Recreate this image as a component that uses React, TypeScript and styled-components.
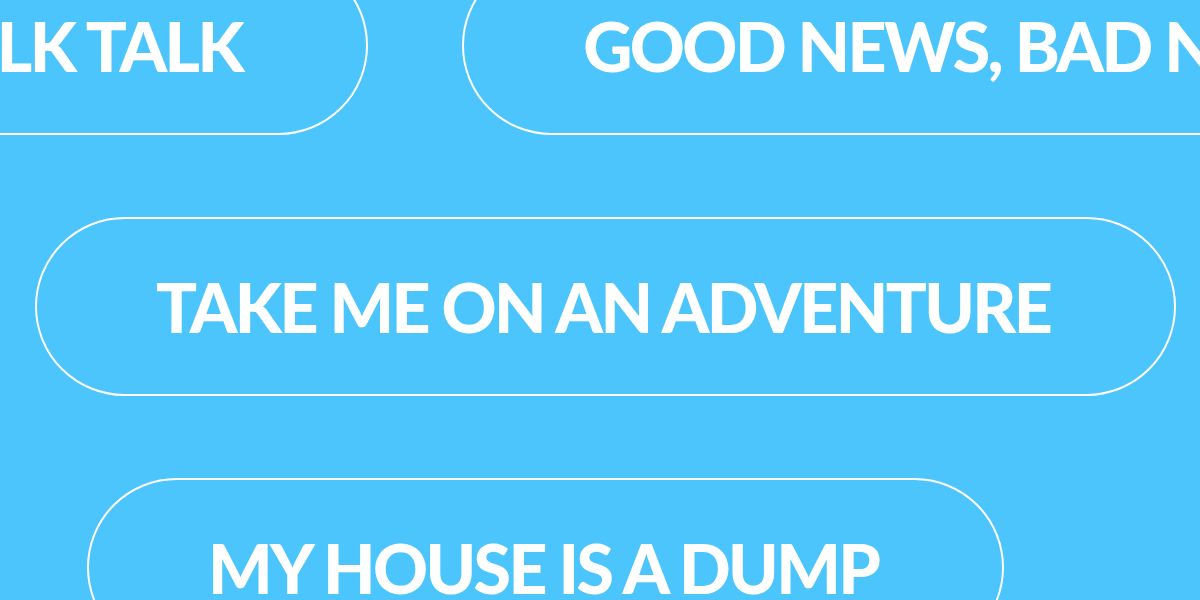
import React from "react";
import styled, { createGlobalStyle } from "styled-components";

const Global = createGlobalStyle`
  html, body { margin: 0; padding: 0; }
  body {
    width: 1200px;
    height: 600px;
    overflow: hidden;
    background: #4bc5fc;
    font-family: Lato, "Noto Sans", sans-serif;
  }
`;

const Stage = styled.main`
  display: flex;
  flex-direction: column;
  gap: 82px;
  margin-top: -44px;
  width: 1200px;
`;

const Row = styled.div<{ $offset: number }>`
  display: flex;
  gap: 94px;
  margin-left: ${(p) => p.$offset}px;
  white-space: nowrap;
`;

const Pill = styled.button`
  flex: none;
  box-sizing: border-box;
  height: 179px;
  padding: 0 124px 0 119px;
  border: 2px solid #ffffff;
  border-radius: 90px;
  background: transparent;
  color: #ffffff;
  font-family: Lato, "Noto Sans", sans-serif;
  font-weight: 900;
  font-size: 68px;
  letter-spacing: -2.6px;
  line-height: 1;
  text-transform: uppercase;
  display: flex;
  align-items: center;
  justify-content: center;
`;

const rows: { offset: number; items: string[] }[] = [
  { offset: -203, items: ["Talk Talk", "Good News, Bad News"] },
  { offset: 35, items: ["Take Me On An Adventure"] },
  { offset: 87, items: ["My House Is A Dump"] },
];

export default function App() {
  return (
    <>
      <Global />
      <Stage>
        {rows.map((r, i) => (
          <Row key={i} $offset={r.offset}>
            {r.items.map((t) => (
              <Pill key={t}>{t}</Pill>
            ))}
          </Row>
        ))}
      </Stage>
    </>
  );
}
